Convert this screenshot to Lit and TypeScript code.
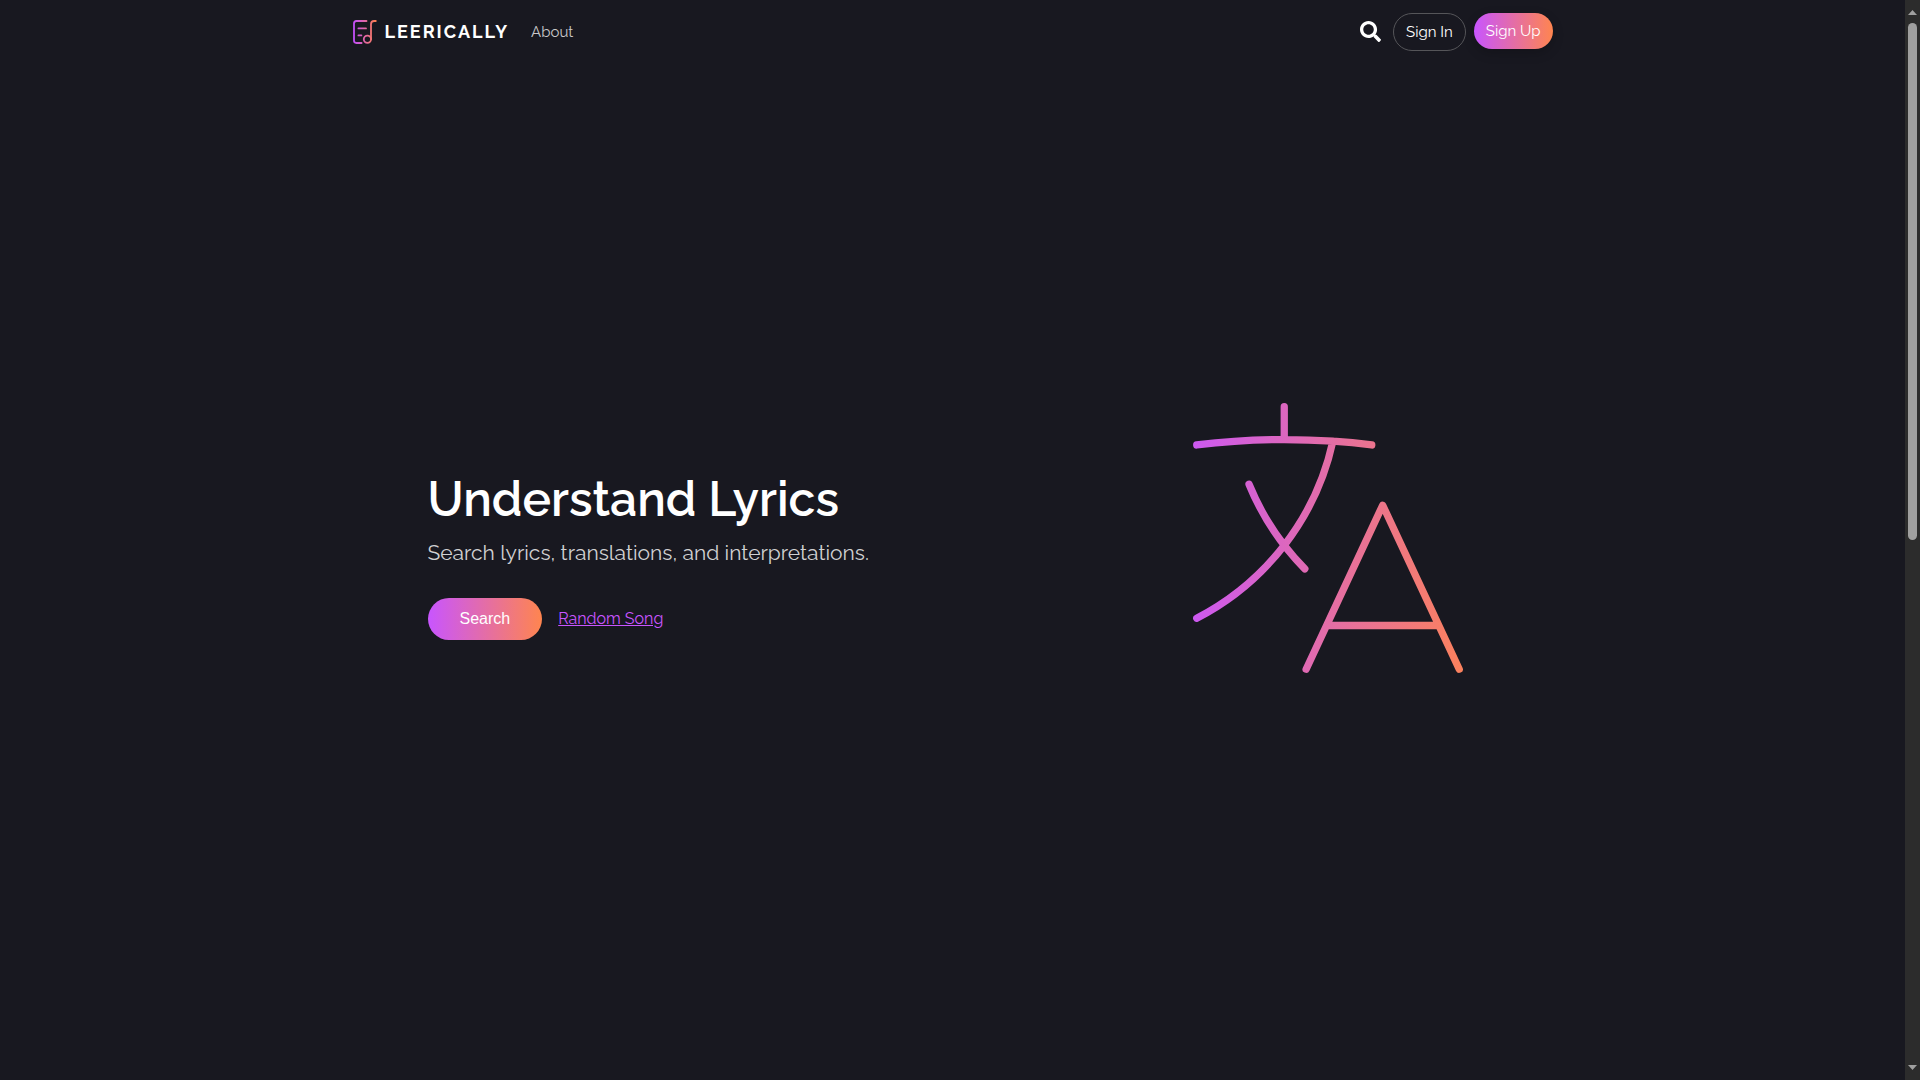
import { LitElement, html, css } from "lit";
import { customElement } from "lit/decorators.js";

@customElement("app-root")
export class AppRoot extends LitElement {
  static styles = css`
    :host {
      display: flex;
      min-height: 100vh;
      background: #181820;
      color: #fff;
      font-family: "Raleway", "Lato", "Open Sans", sans-serif;
      font-size: 16px;
      line-height: 24px;
    }
    * {
      box-sizing: border-box;
    }
    .page {
      flex: 1;
      min-width: 0;
      display: flex;
      flex-direction: column;
    }
    .container {
      width: 100%;
      max-width: 1200px;
      margin: 0 auto;
    }
    .header {
      display: flex;
      align-items: flex-start;
      justify-content: space-between;
      padding: 13px 0;
      font-size: 15px;
    }
    .nav,
    .account,
    .brand,
    .actions {
      display: flex;
      align-items: center;
    }
    .nav {
      height: 38px;
      gap: 22px;
    }
    .brand {
      gap: 7px;
      color: #fff;
      text-decoration: none;
      font-size: 18px;
      font-weight: 700;
      letter-spacing: 2px;
    }
    .logo {
      width: 25px;
      height: 24px;
    }
    .nav-link {
      color: #c8c8ca;
      text-decoration: none;
    }
    .account {
      align-items: flex-start;
      gap: 8px;
    }
    .icon-button {
      display: flex;
      padding: 8px 4px;
      border: 0;
      background: none;
      color: #fff;
      cursor: pointer;
    }
    .search-icon {
      width: 21px;
      height: 21px;
    }
    .pill {
      border: 0;
      border-radius: 24px;
      color: #fff;
      font: inherit;
      cursor: pointer;
      padding: 6px 12px;
      white-space: nowrap;
    }
    .outline {
      border: 1px solid #555559;
      background: none;
    }
    .gradient {
      background: linear-gradient(90deg, #c855ff, #ff854f);
    }
    .raised {
      box-shadow: 0 4px 12px rgba(0, 0, 0, 0.2);
    }
    .hero {
      flex: 1;
      display: flex;
      align-items: center;
      justify-content: space-between;
      padding: 0 50px 68px 75px;
    }
    .copy {
      padding-top: 32px;
    }
    .title {
      margin: 0;
      font-size: 48px;
      line-height: 60px;
      font-weight: 600;
    }
    .subtitle {
      margin: 8px 0 29px;
      color: #d0d0d2;
      font-size: 21px;
      line-height: 32px;
    }
    .actions {
      gap: 16px;
    }
    .primary {
      padding: 9px 32px;
      font-family: "Liberation Sans", Arial, sans-serif;
    }
    .random {
      color: #c855ff;
    }
    .art {
      width: 350px;
      height: 350px;
      flex: none;
    }
    .scrollbar {
      width: 15px;
      flex: none;
      display: flex;
      flex-direction: column;
      align-items: center;
      background: #2c2c2c;
      padding: 10px 0;
    }
    .arrow {
      width: 9px;
      height: 5px;
      fill: #a0a0a0;
    }
    .track {
      flex: 1;
      width: 9px;
      padding: 8px 0;
    }
    .thumb {
      height: 50%;
      border-radius: 5px;
      background: #9f9f9f;
    }
  `;

  render() {
    return html`
      <div class="page">
        <header class="header container">
          <nav class="nav">
            <a class="brand" href="#">
              <svg class="logo" viewBox="1 0 25 24" fill="none" stroke="url(#logo-fill)" stroke-width="1.8" stroke-linecap="round" aria-hidden="true">
                <defs>
                  <linearGradient id="logo-fill" gradientUnits="userSpaceOnUse" x1="1" y1="0" x2="24" y2="0">
                    <stop stop-color="#c04dff" />
                    <stop offset="1" stop-color="#ff7f50" />
                  </linearGradient>
                </defs>
                <path d="M14.5 1H4.4Q2 1 2 3.4V20.6Q2 23 4.4 23H9.6M6.4 8.4H14M6.4 15.4H9.4M23.8 1H22.2Q19 1 19 4.2V19.3" />
                <circle cx="15.4" cy="19.3" r="3.6" />
              </svg>
              <span>LEERICALLY</span>
            </a>
            <a class="nav-link" href="#about">About</a>
          </nav>
          <div class="account">
            <button class="icon-button" type="button" aria-label="Search">
              <svg class="search-icon" viewBox="0 0 512 512" fill="currentColor" aria-hidden="true">
                <path d="M505 442.7L405.3 343c-4.5-4.5-10.6-7-17-7H372c27.6-35.3 44-79.7 44-128C416 93.1 322.9 0 208 0S0 93.1 0 208s93.1 208 208 208c48.3 0 92.7-16.4 128-44v16.3c0 6.4 2.5 12.5 7 17l99.7 99.7c9.4 9.4 24.6 9.4 33.9 0l28.3-28.3c9.4-9.4 9.4-24.6.1-34zM208 336c-70.7 0-128-57.2-128-128 0-70.7 57.2-128 128-128 70.7 0 128 57.2 128 128 0 70.7-57.2 128-128 128z" />
              </svg>
            </button>
            <button class="pill outline" type="button">Sign In</button>
            <button class="pill gradient raised" type="button">Sign Up</button>
          </div>
        </header>
        <main class="hero container">
          <section class="copy">
            <h1 class="title">Understand Lyrics</h1>
            <p class="subtitle">Search lyrics, translations, and interpretations.</p>
            <div class="actions">
              <button class="pill gradient primary" type="button">Search</button>
              <a class="random" href="#random">Random Song</a>
            </div>
          </section>
          <svg class="art" viewBox="0 0 24 24" fill="none" stroke="url(#art-fill)" stroke-width="0.5" stroke-linecap="round" stroke-linejoin="round" aria-hidden="true">
            <defs>
              <linearGradient id="art-fill" gradientUnits="userSpaceOnUse" x1="1" y1="0" x2="23" y2="0">
                <stop stop-color="#c855ff" />
                <stop offset="1" stop-color="#ff854f" />
              </linearGradient>
            </defs>
            <path d="M10.5 21l5.25-11.25L21 21m-9-3h7.5M3 5.621a48.474 48.474 0 016-.371m0 0c1.12 0 2.233.038 3.334.114M9 5.25V3m3.334 2.364C11.176 10.658 7.69 15.08 3 17.502m9.334-12.138c.896.061 1.785.147 2.666.257m-4.589 8.495a18.023 18.023 0 01-3.827-5.802" />
          </svg>
        </main>
      </div>
      <div class="scrollbar" aria-hidden="true">
        <svg class="arrow" viewBox="0 0 9 5"><path d="M4.5 0L9 5H0z" /></svg>
        <div class="track"><div class="thumb"></div></div>
        <svg class="arrow" viewBox="0 0 9 5"><path d="M0 0H9L4.5 5z" /></svg>
      </div>
    `;
  }
}
